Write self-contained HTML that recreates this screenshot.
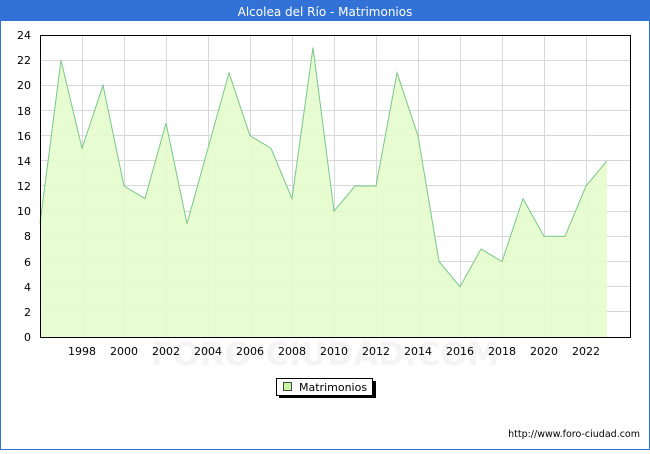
<!DOCTYPE html>
<html><head><style>
body{margin:0;width:650px;height:450px;overflow:hidden;background:#fff;font-family:"DejaVu Sans",sans-serif}
</style></head><body>
<svg width="650" height="450" xmlns="http://www.w3.org/2000/svg" font-family="DejaVu Sans, sans-serif">
<rect x="0.5" y="0.5" width="649" height="449" fill="#fff" stroke="#3272d6"/>
<rect x="0" y="0" width="650" height="21" fill="#3272d6"/>
<text x="325" y="16" font-size="12" fill="#fff" text-anchor="middle">Alcolea del Río - Matrimonios</text>
<g stroke="#d8d8d8" stroke-width="1">
<line x1="40" x2="630" y1="311.5" y2="311.5"/><line x1="40" x2="630" y1="286.5" y2="286.5"/>
<line x1="40" x2="630" y1="261.5" y2="261.5"/><line x1="40" x2="630" y1="236.5" y2="236.5"/>
<line x1="40" x2="630" y1="211.5" y2="211.5"/><line x1="40" x2="630" y1="185.5" y2="185.5"/>
<line x1="40" x2="630" y1="160.5" y2="160.5"/><line x1="40" x2="630" y1="135.5" y2="135.5"/>
<line x1="40" x2="630" y1="110.5" y2="110.5"/><line x1="40" x2="630" y1="85.5" y2="85.5"/>
<line x1="40" x2="630" y1="60.5" y2="60.5"/>
<line x1="82.5" x2="82.5" y1="35" y2="337"/><line x1="124.5" x2="124.5" y1="35" y2="337"/>
<line x1="166.5" x2="166.5" y1="35" y2="337"/><line x1="208.5" x2="208.5" y1="35" y2="337"/>
<line x1="250.5" x2="250.5" y1="35" y2="337"/><line x1="292.5" x2="292.5" y1="35" y2="337"/>
<line x1="334.5" x2="334.5" y1="35" y2="337"/><line x1="376.5" x2="376.5" y1="35" y2="337"/>
<line x1="418.5" x2="418.5" y1="35" y2="337"/><line x1="460.5" x2="460.5" y1="35" y2="337"/>
<line x1="502.5" x2="502.5" y1="35" y2="337"/><line x1="544.5" x2="544.5" y1="35" y2="337"/>
<line x1="586.5" x2="586.5" y1="35" y2="337"/>
</g>
<text x="325" y="365" font-size="32" fill="#f4f4f4" text-anchor="middle" font-weight="bold">FORO-CIUDAD.COM</text>
<polygon fill="#e4fdcc" fill-opacity="0.9" points="40,337 40,223.7 61,60.2 82,148.3 103,85.3 124,186 145,198.6 166,123.1 187,223.7 208,148.3 229,72.8 250,135.7 271,148.3 292,198.6 313,47.6 334,211.2 355,186 376,186 397,72.8 418,135.7 439,261.5 460,286.7 481,248.9 502,261.5 523,198.6 544,236.3 565,236.3 586,186 607,160.8 607,337"/>
<polyline fill="none" stroke="#7ac68a" stroke-width="1" points="40,223.7 61,60.2 82,148.3 103,85.3 124,186 145,198.6 166,123.1 187,223.7 208,148.3 229,72.8 250,135.7 271,148.3 292,198.6 313,47.6 334,211.2 355,186 376,186 397,72.8 418,135.7 439,261.5 460,286.7 481,248.9 502,261.5 523,198.6 544,236.3 565,236.3 586,186 607,160.8"/>
<rect x="40.5" y="35.5" width="590" height="302" fill="none" stroke="#000"/>
<g font-size="11" fill="#000" text-anchor="end">
<text x="31" y="341">0</text><text x="31" y="316">2</text><text x="31" y="291">4</text>
<text x="31" y="266">6</text><text x="31" y="240">8</text><text x="31" y="215">10</text>
<text x="31" y="190">12</text><text x="31" y="165">14</text><text x="31" y="140">16</text>
<text x="31" y="115">18</text><text x="31" y="89">20</text><text x="31" y="64">22</text>
<text x="31" y="39">24</text>
</g>
<g font-size="11" fill="#000" text-anchor="middle">
<text x="82" y="355">1998</text><text x="124" y="355">2000</text><text x="166" y="355">2002</text>
<text x="208" y="355">2004</text><text x="250" y="355">2006</text><text x="292" y="355">2008</text>
<text x="334" y="355">2010</text><text x="376" y="355">2012</text><text x="418" y="355">2014</text>
<text x="460" y="355">2016</text><text x="502" y="355">2018</text><text x="544" y="355">2020</text>
<text x="586" y="355">2022</text>
</g>
<rect x="279" y="381" width="97" height="17" fill="#000"/>
<rect x="276.5" y="378.5" width="96" height="17" fill="#fff" stroke="#000"/>
<rect x="283.5" y="382.5" width="8" height="8" fill="#c9f5a5" stroke="#444"/>
<text x="299" y="391" font-size="11">Matrimonios</text>
<text x="640" y="437" font-size="9.5" text-anchor="end">http://www.foro-ciudad.com</text>
</svg>
</body></html>
